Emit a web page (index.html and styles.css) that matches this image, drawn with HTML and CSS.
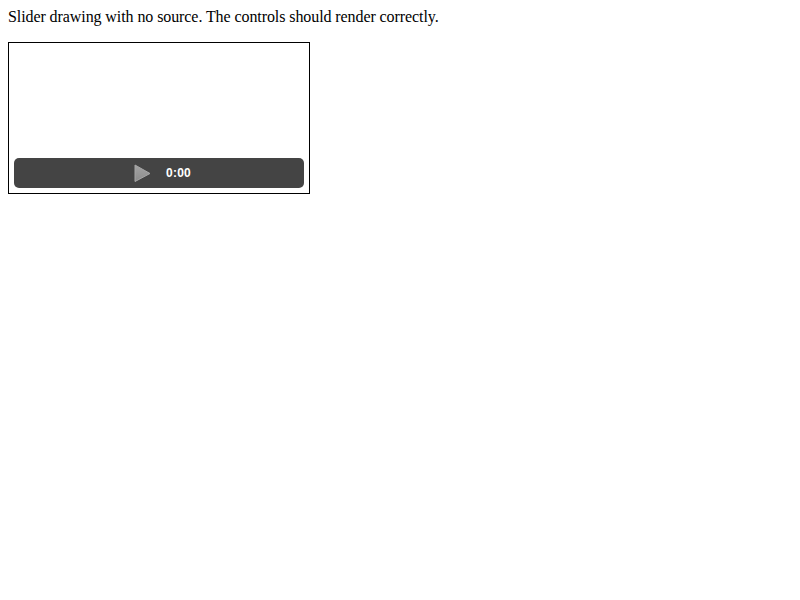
FILE: index.html
```html
<!DOCTYPE html>
<html lang="en">
<head>
<meta charset="utf-8">
<title>Slider drawing</title>
<link rel="stylesheet" href="styles.css">
</head>
<body>
<p class="intro">Slider drawing with no source. The controls should render correctly.</p>
<div class="video">
  <div class="controls">
    <svg class="play" width="18" height="20" viewBox="0 0 18 20">
      <defs>
        <linearGradient id="face" x1="0" y1="0" x2="0" y2="1">
          <stop offset="0" stop-color="#a4a4a4"/>
          <stop offset="1" stop-color="#8c8c8c"/>
        </linearGradient>
      </defs>
      <path d="M2 2 L17 10.5 L2 18.5 Z" fill="url(#face)" stroke="#a6a6a6" stroke-width="1" stroke-linejoin="round"/>
    </svg>
    <span class="time">0:00</span>
  </div>
</div>
</body>
</html>
```

FILE: styles.css
```css
body {
  margin: 8px;
  background: #fff;
  color: #000;
  font: 16px "Liberation Serif", serif;
}

.intro {
  margin: 0 0 16px;
  line-height: 18px;
  letter-spacing: -0.085px;
}

.video {
  display: flex;
  align-items: flex-end;
  box-sizing: border-box;
  width: 302px;
  height: 152px;
  padding: 5px;
  border: 1px solid #000;
}

.controls {
  display: flex;
  align-items: center;
  box-sizing: border-box;
  width: 100%;
  height: 30px;
  padding-left: 119px;
  border-radius: 5px;
  background: #444;
}

.play {
  display: block;
  margin-right: 15px;
}

.time {
  color: #fff;
  font: bold 12px/30px "Liberation Sans", sans-serif;
  letter-spacing: 0.25px;
}
```
